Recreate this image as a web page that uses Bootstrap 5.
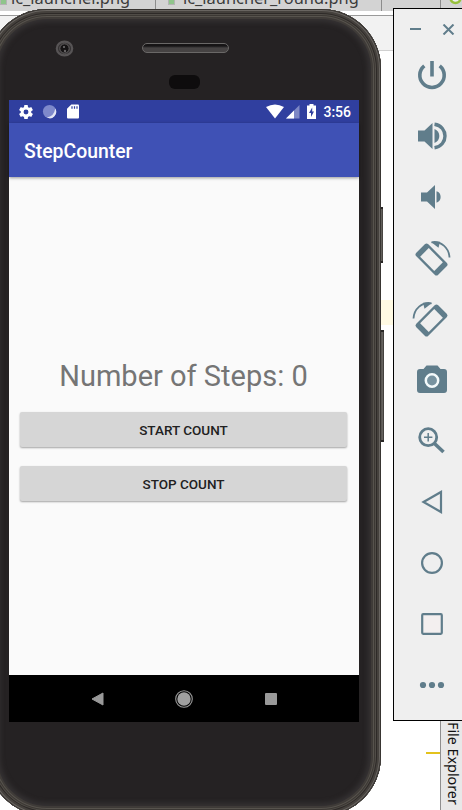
<!DOCTYPE html>
<html lang="en">
<head>
<meta charset="utf-8">
<meta name="viewport" content="width=device-width, initial-scale=1">
<title>StepCounter</title>
<link href="https://cdn.jsdelivr.net/npm/bootstrap@5.3.0/dist/css/bootstrap.min.css" rel="stylesheet">
<style>
body{width:462px;height:810px;font-family:Roboto,"Liberation Sans",sans-serif;background:#fff}
.desk{width:462px;height:810px}
.ide{font-family:"Noto Sans","Open Sans",sans-serif;color:#3b3b3b}
.tabs{height:11px;background:#d3d3d3;font-size:16.4px;line-height:20px}
.tab-file{height:11px;border-right:1px solid #8c8c8c;white-space:nowrap}
.tab-file span{margin-top:-12px}
.tab-file i{width:7px;height:5px;background:#8fc58b;border:1px solid #b4b4b4;border-top:0}
.tab-one{width:156px}
.tab-two{width:226px}
.tab-rest{width:59px}
.toolstrip{height:36px;background:#f2f2f2;border-top:1px solid #9a9a9a;border-bottom:1px solid #d0d0d0;margin-top:4px}
.hl{left:381px;top:300px;width:12px;height:25px;background:#fffae3}
.tick{left:426px;top:752px;width:14px;height:2px;background:#e3c21c}
.explorer{left:440px;top:720px;width:22px;height:90px;background:#e8e8e8;border-left:1px solid #8f8f8f;font:14.3px/18px "Noto Sans","Open Sans",sans-serif;color:#111;writing-mode:vertical-rl;padding-top:2px;white-space:nowrap}
.side-key{left:380px;background:linear-gradient(90deg,#45423f,#686561 60%,#34312f);width:3px;border-top:2px solid #292726;border-bottom:2px solid #292726}
.key-a{top:207px;height:56px}
.key-b{top:330px;height:112px;width:4px}
.phone{left:-13px;top:9px;width:394px;height:807px;border-radius:60px;background:#252223;
box-shadow:inset 0 0 0 1px #383532,inset 0 0 0 2px #696561,inset 0 0 0 4px #45413d,inset 0 0 0 5px #2e2a28,inset 0 0 0 6px #504c47,inset 0 0 0 7px #3c3834,inset 0 0 0 8px #57534d,inset 0 0 0 10px #3f3b38,inset 0 0 5px 13px #353233}
.head{height:91px}
.lens{left:68px;top:31px}
.ear{left:155px;top:34px;width:87px;height:10px;border:1px solid #6a6867;border-radius:5px;background:linear-gradient(#171516 2px,#464343 4px)}
.prox{left:182px;top:66px;width:31px;height:14px;border-radius:6px;background:#0e0c0d}
.screen{width:350px;height:622px;margin-left:22px;background:#fafafa}
.statusbar{height:23px;background:#303f9f;padding:0 8px 0 10px;color:#fff}
.clock{font-size:14px;font-weight:500;line-height:24px}
.appbar{height:54px;background:#3f51b5;color:#fff;padding:4px 0 0 15px;font-size:19.4px;font-weight:500;box-shadow:0 1px 3px rgba(0,0,0,.4)}
.main{height:498px;padding:181px 12px 0 11px}
.steps{font-size:29px;line-height:36px;color:#757575;margin-bottom:18px}
.count-list{row-gap:19px}
.count-btn{height:35px;border:0;border-radius:2px;background:#d6d6d6;color:#212121;font-size:13.5px;font-weight:500;line-height:36px;padding:0;box-shadow:0 1px 2px rgba(0,0,0,.35)}
.softkeys{height:47px;background:#000;gap:71px}
.panel{left:393px;top:8px;width:69px;height:713px;background:#efefef;border:1px solid #000;border-right:0}
.panel svg{color:#607d8b;display:block}
.panel .tool{height:61px;padding-left:8px}
.winctl{height:35px;padding:15px 7px 0 16px}
svg{flex:none}
</style>
<script src="https://cdn.jsdelivr.net/npm/bootstrap@5.3.0/dist/js/bootstrap.bundle.min.js"></script>
</head>
<body class="overflow-hidden">
<div class="desk position-relative overflow-hidden">
  <div class="ide">
    <div class="tabs d-flex overflow-hidden">
      <div class="tab-file tab-one d-flex"><i></i><span class="ms-1">ic_launcher.png</span></div>
      <div class="tab-file tab-two d-flex ps-2"><i class="ms-1"></i><span class="ms-2">ic_launcher_round.png</span></div>
      <div class="tab-file tab-rest"></div>
      <svg class="ms-2" width="13" height="6" viewBox="0 0 13 6"><circle cx="6.5" cy="-2" r="5" fill="#efefef" stroke="#97c03d" stroke-width="2.5"/></svg>
    </div>
    <div class="toolstrip"></div>
  </div>
  <div class="hl position-absolute"></div>
  <div class="tick position-absolute"></div>
  <div class="explorer position-absolute">File Explorer</div>
  <div class="side-key key-a position-absolute"></div>
  <div class="side-key key-b position-absolute"></div>

  <div class="phone position-absolute">
    <div class="head position-relative">
      <svg class="lens position-absolute" width="19" height="17" viewBox="0 0 19 17"><ellipse cx="9.5" cy="8.5" rx="7.7" ry="6.8" fill="#343132" stroke="#575455" stroke-width="2.2"/><circle cx="9.5" cy="8.5" r="4.7" fill="#151314" stroke="#656263"/><circle cx="9" cy="7" r="1" fill="#777"/><circle cx="10" cy="11" r="1.2" fill="#686566"/></svg>
      <div class="ear position-absolute"></div>
      <div class="prox position-absolute"></div>
    </div>
    <div class="screen d-flex flex-column">
      <div class="statusbar d-flex align-items-center">
        <svg width="14" height="14" viewBox="2 2 20 20" fill="#fff"><path d="M19.43 12.98c.04-.32.07-.64.07-.98s-.03-.66-.07-.98l2.11-1.65a.5.5 0 0 0 .12-.64l-2-3.46a.5.5 0 0 0-.61-.22l-2.49 1a7.3 7.3 0 0 0-1.69-.98l-.38-2.65A.49.49 0 0 0 14 2h-4a.49.49 0 0 0-.49.42l-.38 2.65c-.61.25-1.17.59-1.69.98l-2.49-1a.49.49 0 0 0-.61.22l-2 3.46a.49.49 0 0 0 .12.64l2.110 1.65a8 8 0 0 0 0 1.96l-2.110 1.65a.5.5 0 0 0-.12.64l2 3.46c.12.22.39.3.61.22l2.49-1c.52.4 1.08.73 1.69.98l.38 2.65c.03.24.24.42.49.42h4c.25 0 .46-.18.49-.42l.38-2.65a7.7 7.7 0 0 0 1.69-.98l2.49 1c.23.09.49 0 .61-.22l2-3.46a.5.5 0 0 0-.12-.64zM12 15.500a3.500 3.500 0 1 1 0-7 3.500 3.500 0 0 1 0 7z"/></svg>
        <svg style="margin-left:9px" width="15" height="15" viewBox="0 0 15 15"><circle cx="7.500" cy="7.500" r="6.600" fill="#7e89cb"/><path d="M13.300 4.500a6.500 6.500 0 0 1-8.500 9.100Q12 12.500 13.300 4.500z" fill="#e3e6f5"/></svg>
        <svg style="margin-left:10px" width="12" height="15" viewBox="0 0 12 15"><path d="M4.300.5H11a1 1 0 0 1 1 1V13.500a1 1 0 0 1-1 1H1a1 1 0 0 1-1-1V4.800z" fill="#fff"/><path d="M5 2.200v2.500M7.500 2.200v2.500M10 2.200v2.500" stroke="#303f9f" stroke-width="1.200"/></svg>
        <svg class="ms-auto" width="18" height="15" viewBox="0 0 18 15"><path d="M0 3Q9-2 18 3L9 14.500z" fill="#fff"/></svg>
        <svg style="margin-left:1px" width="15" height="15" viewBox="0 0 15 15"><path d="M1 14.500 14.500 1v13.500z" fill="#7e88c5"/><path d="M1 14.500 9 6.500v8z" fill="#fff"/></svg>
        <svg style="margin-left:7px" width="9" height="15" viewBox="0 0 9 15"><path d="M2.500 0h4v1.500H9V15H0V1.500h2.500z" fill="#fff"/><path d="M5.200 3.500 2 9h2v4l3-5.500H5.200z" fill="#303f9f"/></svg>
        <span class="clock" style="margin-left:7px">3:56</span>
      </div>
      <div class="appbar d-flex align-items-center">StepCounter</div>
      <div class="main">
        <div class="steps text-center">Number of Steps: 0</div>
        <div class="count-list d-grid">
          <button class="btn count-btn">START COUNT</button>
          <button class="btn count-btn">STOP COUNT</button>
        </div>
      </div>
      <div class="softkeys d-flex align-items-center justify-content-center">
        <svg width="14" height="14" viewBox="0 0 14 14"><path d="M2 7 13 1v12z" fill="#999" stroke="#999" stroke-linejoin="round"/></svg>
        <svg width="18" height="18" viewBox="0 0 18 18"><circle cx="9" cy="9" r="6.700" fill="#a0a0a0"/><circle cx="9" cy="9" r="8.300" fill="none" stroke="#999" stroke-width="1.100"/></svg>
        <svg width="14" height="14" viewBox="0 0 14 14"><rect x="1" y="1" width="12" height="12" rx="1" fill="#999"/></svg>
      </div>
    </div>
  </div>

  <div class="panel position-absolute">
    <div class="winctl d-flex justify-content-between align-items-start">
      <svg width="11" height="11" viewBox="0 0 11 11"><path d="M0 5h11" stroke="currentColor" stroke-width="2"/></svg>
      <svg width="13" height="11" viewBox="0 0 13 11"><path d="m1.500.5 10 10m0-10-10 10" stroke="currentColor" stroke-width="2"/></svg>
    </div>
    <div class="tool d-flex align-items-center justify-content-center"><svg width="36" height="36" viewBox="0 0 36 36" fill="none" stroke="currentColor" stroke-width="3.600"><path d="M18 4v15.500M10.300 8.800a12.200 12.200 0 1 0 15.400 0"/></svg></div>
    <div class="tool d-flex align-items-center justify-content-center"><svg width="36" height="36" viewBox="0 0 36 36" fill="currentColor"><path d="M4 12.500h6.500L18.500 5v26l-8-7.500H4zM20.500 11a7.500 7.500 0 0 1 0 14z"/><path d="M20.500 6.200c14 2 14 21.600 0 23.600" fill="none" stroke="currentColor" stroke-width="3.400"/></svg></div>
    <div class="tool d-flex align-items-center justify-content-center"><svg width="36" height="36" viewBox="0 0 36 36" fill="currentColor"><path d="M7 13.500h6L21 6v24l-8-7.500H7zM22.500 12.300a6 6 0 0 1 0 11.400z"/></svg></div>
    <div class="tool d-flex align-items-center justify-content-center"><svg width="40" height="40" viewBox="0 0 40 40"><g id="rot"><g transform="rotate(-45 20 21)"><rect x="10.800" y="5.500" width="17" height="31" rx="2.500" fill="currentColor"/><rect x="13.200" y="11" width="12.200" height="20" fill="#efefef"/></g><path d="M19.500 4.300C29 2.500 37 10 37.500 19.500" fill="none" stroke="currentColor" stroke-width="1.800"/><path d="m19 4 9-.3-1.500 6z" fill="currentColor"/></g></svg></div>
    <div class="tool d-flex align-items-center justify-content-center"><svg width="40" height="40" viewBox="0 0 40 40"><use href="#rot" transform="matrix(-1 0 0 1 39 0)"/></svg></div>
    <div class="tool d-flex align-items-center justify-content-center"><svg width="36" height="36" viewBox="0 0 36 36"><path d="M12.500 3.500h11l3 3.500H30a3 3 0 0 1 3 3v18a3 3 0 0 1-3 3H6a3 3 0 0 1-3-3V10a3 3 0 0 1 3-3h3.500z" fill="currentColor"/><circle cx="18" cy="18.500" r="6.200" fill="#7893a0" stroke="#f4fafb" stroke-width="2.500"/></svg></div>
    <div class="tool d-flex align-items-center justify-content-center"><svg width="36" height="36" viewBox="0 0 36 36" fill="none" stroke="currentColor"><circle cx="14.200" cy="14.200" r="8.500" stroke-width="2.800"/><path d="m20.500 20.500 9 8.500" stroke-width="3.600"/><path d="M10 14.200h8.400M14.200 10v8.400" stroke-width="1.500"/></svg></div>
    <div class="tool d-flex align-items-center justify-content-center"><svg width="36" height="36" viewBox="0 0 36 36" fill="none" stroke="currentColor" stroke-width="2.200"><path d="M9.500 18 27 8v20z"/></svg></div>
    <div class="tool d-flex align-items-center justify-content-center"><svg width="36" height="36" viewBox="0 0 36 36" fill="none" stroke="currentColor" stroke-width="2.200"><circle cx="18" cy="18" r="9.900"/></svg></div>
    <div class="tool d-flex align-items-center justify-content-center"><svg width="36" height="36" viewBox="0 0 36 36" fill="#f3efef" stroke="currentColor" stroke-width="2.200"><rect x="8.200" y="8.200" width="19.600" height="19.600" rx="1"/></svg></div>
    <div class="tool d-flex align-items-center justify-content-center"><svg width="36" height="36" viewBox="0 0 36 36" fill="currentColor"><circle cx="9" cy="18" r="3.100"/><circle cx="18" cy="18" r="3.100"/><circle cx="27" cy="18" r="3.100"/></svg></div>
  </div>
</div>
</body>
</html>
